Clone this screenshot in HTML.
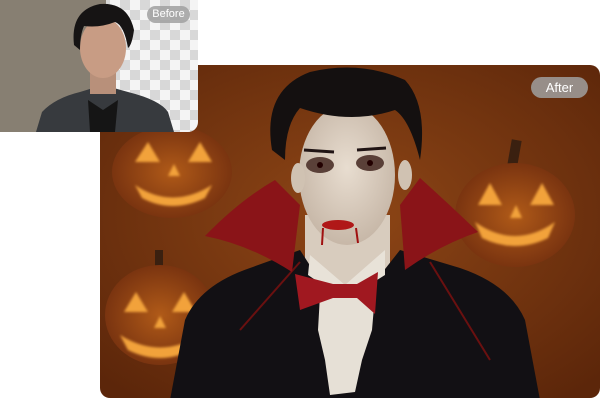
<!DOCTYPE html>
<html><head><style>
html,body{margin:0;padding:0;background:#fff;width:600px;height:400px;overflow:hidden;font-family:"Liberation Sans",sans-serif}
.pill{position:absolute;color:#fff;background:rgba(160,160,160,.85);border-radius:12px;text-align:center}
</style></head><body>
<svg width="600" height="400" style="position:absolute;left:0;top:0">
<defs>
<radialGradient id="bg" cx="0.5" cy="0.45" r="0.7"><stop offset="0" stop-color="#8e4616"/><stop offset="1" stop-color="#5c260a"/></radialGradient>
<radialGradient id="pk" cx="0.5" cy="0.5" r="0.5"><stop offset="0" stop-color="#b05a18"/><stop offset="1" stop-color="#7a3410"/></radialGradient>
<radialGradient id="face" cx="0.5" cy="0.45" r="0.6"><stop offset="0" stop-color="#e8ddd0"/><stop offset="1" stop-color="#c4b4a4"/></radialGradient>
<filter id="gl"><feGaussianBlur stdDeviation="1.2"/></filter>
<pattern id="chk" width="20" height="20" patternUnits="userSpaceOnUse"><rect width="20" height="20" fill="#f4f4f4"/><rect width="10" height="10" fill="#d8d8d8"/><rect x="10" y="10" width="10" height="10" fill="#d8d8d8"/></pattern>
<clipPath id="bc"><rect x="100" y="65" width="500" height="333" rx="10"/></clipPath>
<clipPath id="sc"><rect x="-10" y="-10" width="208" height="142" rx="10"/></clipPath>
</defs>
<g clip-path="url(#bc)">
<rect x="100" y="65" width="500" height="333" fill="url(#bg)"/>
<g>
<ellipse cx="172" cy="172" rx="60" ry="46" fill="url(#pk)"/>
<g filter="url(#gl)" fill="#f2a23a">
<polygon points="135,162 148,142 160,162"/><polygon points="188,162 200,142 212,162"/><polygon points="168,176 174,164 180,176"/>
<path d="M135,185 Q172,210 212,185 L205,198 Q172,214 142,198Z"/></g>
</g>
<g>
<rect x="155" y="250" width="8" height="22" fill="#3a2010"/>
<ellipse cx="160" cy="315" rx="55" ry="50" fill="url(#pk)"/>
<g filter="url(#gl)" fill="#f2a23a">
<polygon points="124,312 136,292 148,312"/><polygon points="172,312 184,292 196,312"/><polygon points="154,328 160,316 166,328"/>
<path d="M120,335 Q160,360 200,335 L192,350 Q160,366 128,350Z"/></g>
</g>
<g>
<rect x="510" y="140" width="10" height="26" fill="#3a2010" transform="rotate(10 515 150)"/>
<ellipse cx="515" cy="215" rx="60" ry="52" fill="url(#pk)"/>
<g filter="url(#gl)" fill="#f2a23a">
<polygon points="478,205 490,183 502,205"/><polygon points="530,205 542,183 554,205"/><polygon points="510,218 516,205 522,218"/>
<path d="M475,222 Q515,250 555,222 L548,238 Q515,254 482,238Z"/></g>
</g>
<rect x="305" y="215" width="85" height="75" fill="#d8ccbe"/>
<path d="M170,400 L185,320 Q200,285 250,268 L300,250 L345,320 L400,250 L460,268 Q510,285 525,320 L540,400Z" fill="#121014"/>
<path d="M240,330 L300,262 M430,262 L490,360" stroke="#6a1010" stroke-width="2"/>
<path d="M205,236 Q240,200 275,180 L300,205 L292,272 Q250,245 205,236Z" fill="#8a1418"/>
<path d="M420,178 Q450,205 478,232 Q440,245 405,270 L400,205Z" fill="#8a1418"/>
<path d="M310,255 L345,285 L385,250 L385,275 L345,300 L308,275Z" fill="#e8e2d8"/>
<path d="M320,295 L375,295 L372,330 L362,360 L355,392 L330,395 L325,360 L318,330Z" fill="#e6e0d6"/>
<path d="M295,274 L333,284 L357,284 L378,272 L375,314 L357,298 L333,298 L300,310Z" fill="#a01820"/>
<ellipse cx="347" cy="175" rx="48" ry="70" fill="url(#face)"/>
<ellipse cx="298" cy="178" rx="7" ry="15" fill="#d0c2b2"/>
<ellipse cx="405" cy="175" rx="7" ry="15" fill="#d0c2b2"/>
<path d="M272,150 Q262,90 310,72 Q360,60 405,80 Q428,105 420,160 Q410,120 395,110 Q350,125 300,108 Q285,125 285,160Z" fill="#141010"/>
<ellipse cx="320" cy="165" rx="14" ry="8" fill="#5a4038"/><ellipse cx="370" cy="163" rx="14" ry="8" fill="#5a4038"/>
<circle cx="320" cy="165" r="3" fill="#200"/><circle cx="370" cy="163" r="3" fill="#200"/>
<path d="M304,150 L334,152 M357,150 L386,148" stroke="#201414" stroke-width="3"/>
<ellipse cx="338" cy="225" rx="16" ry="5" fill="#b01818"/>
<path d="M323,228 L322,245 M356,228 L358,243" stroke="#a01010" stroke-width="2"/>
</g>
<g clip-path="url(#sc)">
<rect x="0" y="0" width="198" height="132" fill="url(#chk)"/>
<rect x="0" y="0" width="106" height="132" fill="#877f72"/>
<path d="M36,132 L42,112 Q55,98 80,92 L103,85 L128,92 Q160,100 168,112 L174,132Z" fill="#373a3e"/>
<path d="M88,100 L103,110 L118,100 L115,132 L90,132Z" fill="#151515"/>
<rect x="90" y="68" width="26" height="26" fill="#b8907a"/>
<ellipse cx="103" cy="48" rx="23" ry="30" fill="#c89c84"/>
<path d="M74,45 Q70,10 100,4 Q128,2 134,30 Q132,45 128,48 Q124,25 115,22 Q100,28 84,26 Q80,35 80,50Z" fill="#161414"/>
</g>
</svg>
<div class="pill" style="left:147px;top:6px;width:43px;height:17px;line-height:17px;font-size:11px;border-radius:9px">Before</div>
<div class="pill" style="left:531px;top:77px;width:57px;height:21px;line-height:21px;font-size:13px;border-radius:11px">After</div>
</body></html>
